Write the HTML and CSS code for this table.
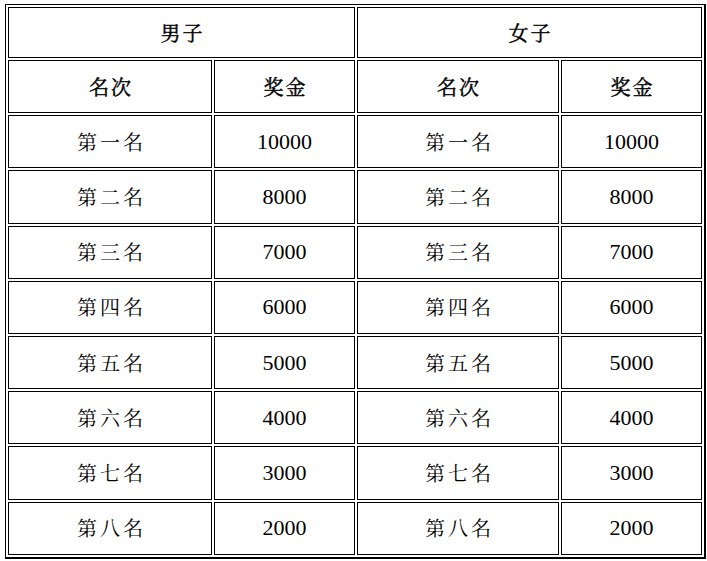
FILE: index.html
```html
<!DOCTYPE html>
<html lang="zh-CN">
<head>
<meta charset="utf-8">
<title>奖金表</title>
<link rel="stylesheet" href="styles.css">
</head>
<body>
<table class="prize">
  <colgroup>
    <col class="c-rank">
    <col class="c-money">
    <col class="c-rank2">
    <col class="c-money">
  </colgroup>
  <tr class="r-top">
    <th class="head" colspan="2">男子</th>
    <th class="head" colspan="2">女子</th>
  </tr>
  <tr class="r">
    <th class="head">名次</th>
    <th class="head">奖金</th>
    <th class="head">名次</th>
    <th class="head">奖金</th>
  </tr>
  <tr class="r"><td>第一名</td><td class="num">10000</td><td>第一名</td><td class="num">10000</td></tr>
  <tr class="r"><td>第二名</td><td class="num">8000</td><td>第二名</td><td class="num">8000</td></tr>
  <tr class="r"><td>第三名</td><td class="num">7000</td><td>第三名</td><td class="num">7000</td></tr>
  <tr class="r"><td>第四名</td><td class="num">6000</td><td>第四名</td><td class="num">6000</td></tr>
  <tr class="r"><td>第五名</td><td class="num">5000</td><td>第五名</td><td class="num">5000</td></tr>
  <tr class="r"><td>第六名</td><td class="num">4000</td><td>第六名</td><td class="num">4000</td></tr>
  <tr class="r"><td>第七名</td><td class="num">3000</td><td>第七名</td><td class="num">3000</td></tr>
  <tr class="r"><td>第八名</td><td class="num">2000</td><td>第八名</td><td class="num">2000</td></tr>
</table>
</body>
</html>
```
FILE: styles.css
```css
html, body {
  margin: 0;
  padding: 0;
  background: #fff;
}

body {
  padding: 4px 0 0 5px;
}

.prize {
  table-layout: fixed;
  width: 700px;
  border-collapse: separate;
  border-spacing: 2px;
  border-style: solid;
  border-color: #000;
  border-width: 1px 2px 2px 1px;
  font-family: "Noto Serif CJK SC", "Liberation Serif", "Noto Sans CJK SC", serif;
  font-size: 20px;
  color: #000;
}

.c-rank { width: 204px; }
.c-rank2 { width: 202px; }
.c-money { width: 141px; }

.prize th,
.prize td {
  box-sizing: border-box;
  border: 1px solid #000;
  padding: 0;
  text-align: center;
  vertical-align: middle;
  letter-spacing: 3px;
  text-indent: 3px;
  line-height: 1;
  font-weight: normal;
}

.prize .head {
  font-weight: normal;
  letter-spacing: 2px;
  text-indent: 2px;
  -webkit-text-stroke: 0.45px #000;
}

.prize .num {
  font-family: "Liberation Serif", serif;
  font-size: 22px;
  letter-spacing: 0;
  text-indent: 0;
}

.r-top {
  height: 51px;
}

.r {
  height: 53.2px;
}
```
